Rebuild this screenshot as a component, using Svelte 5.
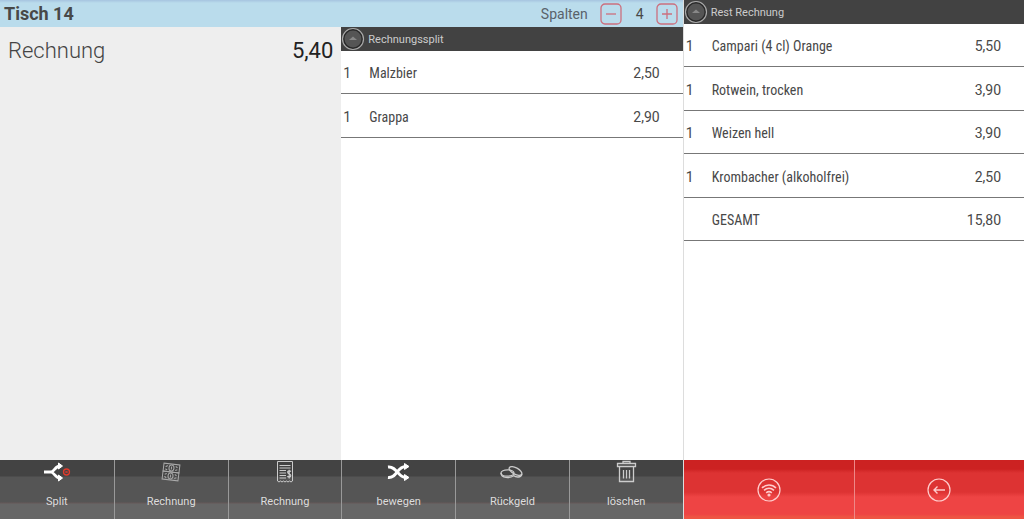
<script>
    let spalten = 4

    let split = [
        {anzahl: "1", name: "Malzbier", preis: "2,50"},
        {anzahl: "1", name: "Grappa", preis: "2,90"}
    ]

    let rest = [
        {anzahl: "1", name: "Campari (4 cl) Orange", preis: "5,50"},
        {anzahl: "1", name: "Rotwein, trocken", preis: "3,90"},
        {anzahl: "1", name: "Weizen hell", preis: "3,90"},
        {anzahl: "1", name: "Krombacher (alkoholfrei)", preis: "2,50"},
        {anzahl: "", name: "GESAMT", preis: "15,80"}
    ]

    let aktionen = [
        {icon: "split", text: "Split"},
        {icon: "geld", text: "Rechnung"},
        {icon: "bon", text: "Rechnung"},
        {icon: "tauschen", text: "bewegen"},
        {icon: "muenzen", text: "Rückgeld"},
        {icon: "korb", text: "löschen"}
    ]

    function weniger() {
        if (spalten > 1) {
            spalten = spalten - 1
        }
    }
    function mehr() {
        spalten = spalten + 1
    }
</script>

{#snippet liste(titel, posten)}
    <div class="list_head">
        <button class="toggle" aria-label="{titel} einklappen">
            <svg viewBox="0 0 24 24" width="24" height="24">
                <circle cx="12" cy="12" r="10.5" fill="#292929" stroke="#aaa" stroke-width="1.2" />
                <circle cx="12" cy="12" r="8.5" fill="#555" />
                <path d="M8 13 L12 9.5 L16 13 Z" fill="#888" />
            </svg>
        </button>
        <h2>{titel}</h2>
    </div>
    <table>
        <tbody>
            {#each posten as p}
                <tr>
                    <td class="qty">{p.anzahl}</td>
                    <td class="name">{p.name}</td>
                    <td class="price">{p.preis}</td>
                </tr>
            {/each}
        </tbody>
    </table>
{/snippet}

<main>
    <div class="left">
        <header>
            <h1>Tisch 14</h1>
            <div class="columns">
                <span>Spalten</span>
                <button on:click={weniger} aria-label="weniger Spalten">
                    <svg viewBox="0 0 22 22" width="22" height="22">
                        <rect x="1" y="1" width="20" height="20" rx="4" />
                        <path d="M6 11 H16" />
                    </svg>
                </button>
                <span class="count">{spalten}</span>
                <button on:click={mehr} aria-label="mehr Spalten">
                    <svg viewBox="0 0 22 22" width="22" height="22">
                        <rect x="1" y="1" width="20" height="20" rx="4" />
                        <path d="M6 11 H16 M11 6 V16" />
                    </svg>
                </button>
            </div>
        </header>
        <div class="content">
            <section class="total">
                <span>Rechnung</span>
                <span class="sum">5,40</span>
            </section>
            <section class="bill">
                {@render liste("Rechnungssplit", split)}
            </section>
        </div>
        <nav class="actions">
            {#each aktionen as a}
                <button>
                    <svg viewBox="0 0 28 24" width="28" height="24" fill="none" stroke="#ccc">
                        {#if a.icon === "split"}
                            <g stroke="#fff" stroke-width="2.8">
                                <path d="M1 12 H8 C12 11 12 6 17 6 M8 12 C12 13 12 18 17 18" />
                                <path d="M15.5 3 L19.5 6 L15.5 9 Z M15.5 15 L19.5 18 L15.5 21 Z" fill="#fff" stroke-width="1" />
                            </g>
                            <circle cx="23.5" cy="12" r="3" stroke="#e03a2c" stroke-width="1.3" />
                            <path d="M22.3 10.8 L24.7 13.2 M24.7 10.8 L22.3 13.2" stroke="#e03a2c" />
                        {:else if a.icon === "geld"}
                            <g transform="rotate(7 14 12)" stroke="#aaa">
                                <rect x="6" y="4" width="16" height="8" />
                                <rect x="6" y="12" width="16" height="8" />
                                <ellipse cx="14" cy="8" rx="2.5" ry="3" />
                                <ellipse cx="14" cy="16" rx="2.5" ry="3" />
                                <path d="M8 7.5 L10 6 M8 9.5 L10 10.5 M18 6 L20 7 M18 10 L20 9 M8 15 L10 14 M8 17 L10 18.5 M18 14 L20 15 M18 18 L20 17 M14 6.5 V9.5 M14 14.5 V17.5" />
                            </g>
                        {:else if a.icon === "bon"}
                            <path d="M6.5 21 V1.5 H21.5 V21 L20 22 L18.5 21 L17 22 L15.5 21 L14 22 L12.5 21 L11 22 L9.5 21 L8 22 Z" />
                            <path d="M8.5 5.5 H19.5 M8.5 8 H19.5 M8.5 10.5 H15 M8.5 13 H15 M8.5 15.5 H15 M8.5 18 H15" stroke-width="1.2" />
                            <path d="M20 11.5 C18 10 15.8 11.5 17 13 C18 14 20 14 19.8 15.8 C19.5 17.4 17.5 17.2 16.3 16.2 M18.2 9.8 V18.5" stroke-width="1.2" />
                        {:else if a.icon === "tauschen"}
                            <g stroke="#fff" stroke-width="3">
                                <path d="M3 7 C12 6 13 18 21 17.500 M3 17.500 C12 18.500 12 6 21 6.500" />
                                <path d="M19.500 3.500 L24 6.500 L19.500 9.500 Z M19.500 14.500 L24 17.500 L19.500 20.500 Z" fill="#fff" stroke-width="1" />
                            </g>
                        {:else if a.icon === "muenzen"}
                            <g stroke-width="1.3">
                                <ellipse cx="9.5" cy="13" rx="6.5" ry="3.2" />
                                <path d="M3 13 C3 18.5 12 18.5 16 15.5" />
                                <ellipse cx="17.5" cy="11" rx="7" ry="3.2" transform="rotate(28 17.5 11)" />
                                <path d="M24 14 C23 18 18 17.5 15.5 15.5" />
                            </g>
                        {:else}
                            <path d="M5.5 3.5 H23.5 V6.5 H5.5 Z M11 3.5 V1.5 H18 V3.5 M7.5 6.5 V21.5 H21.5 V6.5" stroke-width="1.3" />
                            <path d="M11.5 10 V18.5 M14.5 10 V18.5 M17.5 10 V18.5" stroke-width="1.3" />
                        {/if}
                    </svg>
                    {a.text}
                </button>
            {/each}
        </nav>
    </div>
    <div class="right">
        <section class="bill">
            {@render liste("Rest Rechnung", rest)}
        </section>
        <nav class="system">
            <button aria-label="WLAN">
                <svg viewBox="0 0 24 24" width="24" height="24">
                    <circle cx="12" cy="12" r="11" />
                    <path d="M5 10 C9 6 15 6 19 10 M7 12.400 C10 9.600 14 9.600 17 12.400 M9.200 14.800 C11 13.200 13 13.200 14.800 14.800" stroke-width="1.6" />
                    <circle cx="12" cy="17" r="1" fill="#fcc" />
                </svg>
            </button>
            <button aria-label="zurück">
                <svg viewBox="0 0 24 24" width="24" height="24">
                    <circle cx="12" cy="12" r="11" />
                    <path d="M18 12 H7 M10.5 8.5 L7 12 L10.5 15.5" stroke-width="1.4" />
                </svg>
            </button>
        </nav>
    </div>
</main>

<style>
:global(body) {
    margin: 0;
    background-color: white;
}

main {
    display: grid;
    grid-template-columns: 2fr 1fr;
    min-height: 100vh;
    font-family: Roboto, "Liberation Sans", sans-serif;
    color: #484848;
}

button {
    padding: 0;
    border: none;
    background: none;
    font: inherit;
    cursor: pointer;
}

svg {
    display: block;
}

h1, h2 {
    margin: 0;
}

.left, .right {
    display: flex;
    flex-direction: column;
    min-width: 0;
}

.right {
    border-left: 1px solid #ddd;
}

header {
    display: flex;
    align-items: center;
    justify-content: space-between;
    box-sizing: border-box;
    height: 27px;
    padding: 0 5px 0 4px;
    background: linear-gradient(#a6c4e0, #badcec 3px);
}

h1 {
    font-size: 18px;
    font-weight: 700;
}

.columns {
    display: flex;
    align-items: center;
    font-size: 14px;
    color: #59626a;
}

.columns button {
    margin-left: 12px;
}

.columns svg {
    fill: none;
    stroke: #cc6f7e;
    stroke-width: 1.3;
}

.count {
    margin-left: 14px;
    color: #484848;
}

.content {
    display: grid;
    grid-template-columns: 1fr 1fr;
    flex: 1;
}

.total {
    display: flex;
    justify-content: space-between;
    align-items: flex-start;
    padding: 10px 8px;
    background-color: #eee;
    font-size: 22px;
    font-weight: 300;
    line-height: 28px;
    color: #444;
}

.sum {
    font-weight: 400;
    color: #222;
}

.bill {
    flex: 1;
    background-color: white;
}

.list_head {
    display: flex;
    align-items: center;
    gap: 3px;
    height: 24px;
    background-color: #424242;
}

h2 {
    font-size: 11px;
    font-weight: 400;
    color: #ccc;
}

table {
    width: 100%;
    border-collapse: separate;
    border-spacing: 0;
    font-size: 14px;
}

tr {
    height: 43px;
}

tr:nth-child(even) {
    height: 44px;
}

td {
    padding: 2px 0 0;
    border-bottom: 1px solid #777;
}

.qty {
    width: 26px;
    padding-left: 2px;
}

.name {
    font-family: "Roboto Condensed", Roboto, "Liberation Sans", sans-serif;
}

.price {
    padding-right: 23px;
    text-align: right;
}

.actions, .system {
    display: grid;
    height: 59px;
}

.actions {
    grid-template-columns: repeat(6, 1fr);
    background: linear-gradient(#434343 16px, #555 17px, #555 42px, #665858 43px, #666 44px);
}

.actions button {
    display: flex;
    flex-direction: column;
    align-items: center;
    gap: 10px;
    font-size: 11px;
    line-height: 16px;
    color: #ddd;
}

.actions button + button {
    border-left: 1px solid #999;
}

.system {
    grid-template-columns: 1fr 1fr;
    background: linear-gradient(#cc2222 9px, #dd3333 13px, #dd3333 32px, #ee4444 37px, #ee4444 54px, #ee5544 57px);
}

.system button {
    display: flex;
    align-items: center;
    justify-content: center;
}

.system button + button {
    border-left: 1px solid #ee8888;
}

.system svg {
    fill: none;
    stroke: #fcc;
    stroke-width: 1.2;
}
</style>
